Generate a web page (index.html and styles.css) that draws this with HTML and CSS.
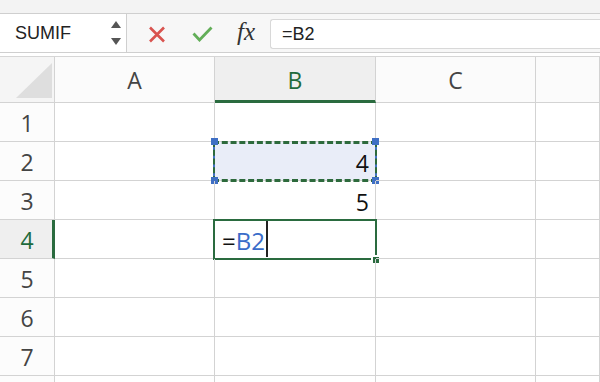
FILE: index.html
```html
<!DOCTYPE html>
<html lang="en">
<head>
    <meta charset="UTF-8">
    <meta name="viewport" content="width=device-width, initial-scale=1.0">
    <title>Sheet</title>
    <link rel="stylesheet" href="styles.css">
</head>
<body>
    <div class="top-band"></div>

    <div class="formula-bar">
        <div class="name-box">
            <span class="name-text">SUMIF</span>
            <svg class="spinner" width="10" height="26" viewBox="0 0 10 26">
                <polygon points="0,7 5,0 10,7" fill="#555"/>
                <polygon points="0,17 10,17 5,24" fill="#555"/>
            </svg>
        </div>
        <div class="bar-icons">
            <svg class="icon-cancel" width="18" height="17" viewBox="0 0 18 17">
                <path d="M2 1.5 L16 15.5 M16 1.5 L2 15.5" stroke="#d9534f" stroke-width="2.6" fill="none"/>
            </svg>
            <svg class="icon-enter" width="21" height="16" viewBox="0 0 21 16">
                <path d="M1.5 7.5 L7.5 14 L19.5 1.5" stroke="#62ae58" stroke-width="2.8" fill="none"/>
            </svg>
            <span class="icon-fx">fx</span>
        </div>
        <div class="formula-input">=B2</div>
    </div>
    <div class="bar-gap"></div>

    <div class="sheet">
        <!-- header row -->
        <div class="corner"><div class="corner-tri"></div></div>
        <div class="col-head">A</div>
        <div class="col-head selected">B</div>
        <div class="col-head">C</div>
        <div class="col-head"></div>

        <!-- row 1 -->
        <div class="row-head">1</div>
        <div class="cell"></div>
        <div class="cell"></div>
        <div class="cell"></div>
        <div class="cell"></div>

        <!-- row 2 -->
        <div class="row-head">2</div>
        <div class="cell"></div>
        <div class="cell ref-cell">
            <span class="value">4</span>
            <div class="ref-box"></div>
            <div class="ants"></div>
            <span class="handle tl"></span>
            <span class="handle tr"></span>
            <span class="handle bl"></span>
            <span class="handle br"></span>
        </div>
        <div class="cell"></div>
        <div class="cell"></div>

        <!-- row 3 -->
        <div class="row-head">3</div>
        <div class="cell"></div>
        <div class="cell"><span class="value">5</span></div>
        <div class="cell"></div>
        <div class="cell"></div>

        <!-- row 4 -->
        <div class="row-head selected">4</div>
        <div class="cell"></div>
        <div class="cell active-cell">
            <span class="edit-text">=<span class="ref-text">B2</span></span><span class="caret"></span>
            <div class="active-box"></div>
            <span class="fill-handle"></span>
        </div>
        <div class="cell"></div>
        <div class="cell"></div>

        <!-- row 5 -->
        <div class="row-head">5</div>
        <div class="cell"></div>
        <div class="cell"></div>
        <div class="cell"></div>
        <div class="cell"></div>

        <!-- row 6 -->
        <div class="row-head">6</div>
        <div class="cell"></div>
        <div class="cell"></div>
        <div class="cell"></div>
        <div class="cell"></div>

        <!-- row 7 -->
        <div class="row-head">7</div>
        <div class="cell"></div>
        <div class="cell"></div>
        <div class="cell"></div>
        <div class="cell"></div>

        <!-- row 8, only its top edge is in view -->
        <div class="row-head"></div>
        <div class="cell"></div>
        <div class="cell"></div>
        <div class="cell"></div>
        <div class="cell"></div>
    </div>
</body>
</html>
```

FILE: styles.css
```css
* {
    box-sizing: border-box;
}
body {
    margin: 0;
    font-family: "Open Sans", sans-serif;
    background: #fff;
    overflow: hidden;
}
.top-band {
    height: 14px;
    background-color: #f3f3f3;
    border-bottom: 1px solid #cfcfcf;
}

/* Formula bar */
.formula-bar {
    display: flex;
    height: 39px;
    background-color: #f7f7f7;
    border-bottom: 1px solid #cfcfcf;
}
.name-box {
    width: 127px;
    display: flex;
    align-items: center;
    justify-content: space-between;
    padding: 0 5px 0 15px;
    background-color: #fff;
    border-right: 1px solid #cfcfcf;
}
.name-text {
    font-family: "Liberation Sans", Arial, sans-serif;
    font-size: 18px;
    color: #222;
}
.spinner {
    margin-top: 2px;
}
.bar-icons {
    display: flex;
    align-items: center;
    width: 143px;
    padding-left: 21px;
}
.icon-cancel {
    margin-top: 2px;
}
.icon-enter {
    margin-left: 26px;
    margin-top: 2px;
}
.icon-fx {
    margin-left: 24px;
    font-family: "Liberation Serif", serif;
    font-style: italic;
    font-size: 25px;
    color: #333;
    margin-top: -2px;
}
.formula-input {
    flex: 1;
    align-self: flex-start;
    margin-top: 5px;
    height: 30px;
    padding: 2px 0 0 11px;
    background-color: #fff;
    border: 1px solid #d8d8d8;
    border-right: none;
    border-radius: 3px 0 0 3px;
    font-family: "Liberation Sans", Arial, sans-serif;
    font-size: 18px;
    line-height: 24px;
    color: #222;
}
.bar-gap {
    height: 4px;
    border-bottom: 1px solid #d6d6d6;
}

/* Grid */
.sheet {
    display: grid;
    grid-template-columns: 55px 160px 161px 160px 1fr;
    grid-template-rows: 46px repeat(8, 39px);
}
.corner, .col-head, .row-head, .cell {
    border-right: 1px solid #d3d3d3;
    border-bottom: 1px solid #d3d3d3;
}
.corner {
    position: relative;
    background-color: #f5f5f5;
}
.corner-tri {
    position: absolute;
    left: 16px;
    top: 6px;
    width: 36px;
    height: 35px;
    background-color: #dedede;
    clip-path: polygon(100% 0, 100% 100%, 0 100%);
}
.col-head {
    display: flex;
    align-items: center;
    justify-content: center;
    background-color: #fbfbfb;
    font-size: 23px;
    color: #444;
}
.col-head.selected {
    background-color: #efefef;
    color: #1f6b3d;
    border-bottom: 3px solid #2a6b3f;
    padding-top: 2px;
}
.row-head {
    display: flex;
    align-items: center;
    justify-content: center;
    padding-top: 2px;
    background-color: #fcfcfc;
    font-size: 23px;
    color: #444;
}
.row-head.selected {
    background-color: #efefef;
    color: #1f6b3d;
    border-right: 3px solid #2a6b3f;
    padding-left: 2px;
}
.cell {
    position: relative;
    display: flex;
    align-items: center;
    justify-content: flex-end;
    padding: 3px 6px 0 6px;
}
.value {
    font-size: 23px;
    color: #111;
}

/* copy range on B2 */
.ref-cell {
    background-color: #e9edf8;
}
.ref-box {
    position: absolute;
    left: -2px;
    right: -2px;
    top: -1px;
    bottom: -1px;
    border-left: 2px solid #4472c4;
    border-right: 2px solid #4472c4;
}
.ants {
    position: absolute;
    left: -2px;
    right: -2px;
    top: -1px;
    bottom: -2px;
    border: 3px dashed #2d6a3c;
    border-left-width: 2px;
    border-right-width: 2px;
}
.handle {
    position: absolute;
    width: 7px;
    height: 7px;
    background-color: #3f6fc4;
}
.handle.tl { left: -4px; top: -4px; }
.handle.tr { right: -4px; top: -4px; }
.handle.bl { left: -4px; bottom: -4px; }
.handle.br { right: -4px; bottom: -4px; }

/* active editing cell */
.active-cell {
    justify-content: flex-start;
    padding-left: 7px;
}
.edit-text {
    font-size: 24px;
    color: #111;
}
.ref-text {
    color: #3a6cc9;
}
.caret {
    width: 2px;
    height: 36px;
    margin-left: 1px;
    margin-top: -3px;
    background-color: #222;
}
.active-box {
    position: absolute;
    left: -2px;
    right: -2px;
    top: -1px;
    bottom: -2px;
    border: 2px solid #2a6b3f;
}
.fill-handle {
    position: absolute;
    right: -4px;
    bottom: -5px;
    width: 8px;
    height: 8px;
    background-color: #2a6b3f;
    border-left: 2px solid #fff;
    border-top: 2px solid #fff;
}
```
